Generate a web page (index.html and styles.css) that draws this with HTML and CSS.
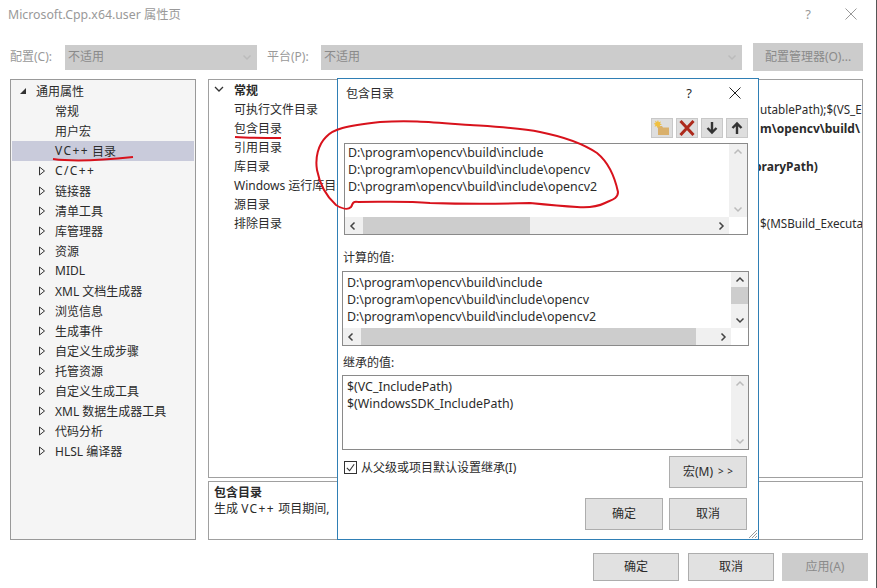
FILE: index.html
```html
<!DOCTYPE html>
<html lang="zh-CN">
<head>
  <meta charset="UTF-8" />
  <title>Microsoft.Cpp.x64.user 属性页</title>
  <link rel="stylesheet" href="styles.css">
</head>
<body>

<div class="window">
  <!-- 标题栏 -->
  <div class="titlebar">
    <span class="title">Microsoft.Cpp.x64.user 属性页</span>
    <span class="help">?</span>
    <svg class="close" viewBox="0 0 12 12"><path d="M.5.5l11 11M11.5.5l-11 11"/></svg>
  </div>

  <!-- 配置 / 平台 -->
  <div class="configbar">
    <span class="configlabel">配置(C):</span>
    <div class="combo combo-config"><span>不适用</span><svg class="chev chev-pale" viewBox="0 0 10 10"><path d="M1.5 3.5 5 7 8.5 3.5"/></svg></div>
    <span class="configlabel platform">平台(P):</span>
    <div class="combo combo-platform"><span>不适用</span><svg class="chev chev-pale" viewBox="0 0 10 10"><path d="M1.5 3.5 5 7 8.5 3.5"/></svg></div>
    <div class="btn-manager">配置管理器(O)...</div>
  </div>

  <div class="main">
    <!-- 左侧树 -->
    <div class="tree">
      <div class="node root"><svg class="tri" viewBox="0 0 8 8"><path class="solid" d="M7 1v6H1z"/></svg>通用属性</div>
      <div class="node leaf">常规</div>
      <div class="node leaf">用户宏</div>
      <div class="node leaf selected"><span class="wide">VC++</span>&nbsp;目录</div>
      <div class="node"><svg class="tri" viewBox="0 0 8 10"><path d="M1.5 1 6.5 5l-5 4z"/></svg><span class="wide">C/C++</span></div>
      <div class="node"><svg class="tri" viewBox="0 0 8 10"><path d="M1.5 1 6.5 5l-5 4z"/></svg>链接器</div>
      <div class="node"><svg class="tri" viewBox="0 0 8 10"><path d="M1.5 1 6.5 5l-5 4z"/></svg>清单工具</div>
      <div class="node"><svg class="tri" viewBox="0 0 8 10"><path d="M1.5 1 6.5 5l-5 4z"/></svg>库管理器</div>
      <div class="node"><svg class="tri" viewBox="0 0 8 10"><path d="M1.5 1 6.5 5l-5 4z"/></svg>资源</div>
      <div class="node"><svg class="tri" viewBox="0 0 8 10"><path d="M1.5 1 6.5 5l-5 4z"/></svg>MIDL</div>
      <div class="node"><svg class="tri" viewBox="0 0 8 10"><path d="M1.5 1 6.5 5l-5 4z"/></svg>XML 文档生成器</div>
      <div class="node"><svg class="tri" viewBox="0 0 8 10"><path d="M1.5 1 6.5 5l-5 4z"/></svg>浏览信息</div>
      <div class="node"><svg class="tri" viewBox="0 0 8 10"><path d="M1.5 1 6.5 5l-5 4z"/></svg>生成事件</div>
      <div class="node"><svg class="tri" viewBox="0 0 8 10"><path d="M1.5 1 6.5 5l-5 4z"/></svg>自定义生成步骤</div>
      <div class="node"><svg class="tri" viewBox="0 0 8 10"><path d="M1.5 1 6.5 5l-5 4z"/></svg>托管资源</div>
      <div class="node"><svg class="tri" viewBox="0 0 8 10"><path d="M1.5 1 6.5 5l-5 4z"/></svg>自定义生成工具</div>
      <div class="node"><svg class="tri" viewBox="0 0 8 10"><path d="M1.5 1 6.5 5l-5 4z"/></svg>XML 数据生成器工具</div>
      <div class="node"><svg class="tri" viewBox="0 0 8 10"><path d="M1.5 1 6.5 5l-5 4z"/></svg>代码分析</div>
      <div class="node"><svg class="tri" viewBox="0 0 8 10"><path d="M1.5 1 6.5 5l-5 4z"/></svg>HLSL 编译器</div>
    </div>

    <!-- 右侧属性表 -->
    <div class="rightcol">
      <div class="props">
        <div class="prop group"><svg class="groupchev" viewBox="0 0 10 10"><path d="M1 3l4 4 4-4"/></svg><span class="pname">常规</span></div>
        <div class="prop"><span class="pname">可执行文件目录</span><span class="pval">utablePath);$(VS_E</span></div>
        <div class="prop"><span class="pname">包含目录</span><span class="pval strong">m\opencv\build\</span></div>
        <div class="prop"><span class="pname">引用目录</span></div>
        <div class="prop"><span class="pname">库目录</span><span class="pval strong lib">braryPath)</span></div>
        <div class="prop"><span class="pname">Windows 运行库目录</span></div>
        <div class="prop"><span class="pname">源目录</span></div>
        <div class="prop"><span class="pname">排除目录</span><span class="pval">$(MSBuild_Executa</span></div>
      </div>
      <div class="desc">
        <div class="desctitle">包含目录</div>
        <div>生成 <span class="wide">VC++</span> 项目期间,</div>
      </div>
    </div>
  </div>

  <div class="footer">
    <div class="btn btn-foot">确定</div>
    <div class="btn btn-foot">取消</div>
    <div class="btn btn-foot disabled">应用(A)</div>
  </div>
</div>

<!-- 包含目录 对话框 -->
<div class="dialog">
  <div class="dlghead">
    <span class="dlgtitle">包含目录</span>
    <span class="dlghelp">?</span>
    <svg class="dlgclose" viewBox="0 0 12 12"><path d="M.5.5l11 11M11.5.5l-11 11"/></svg>
  </div>

  <div class="tools">
    <div class="tool"><svg viewBox="0 0 16 16"><path fill="#d9b06c" d="M4 6h4l1 1.500h6V15H4z"/><path fill="#f0c040" d="M4 0l.8 2.200 2.200-.8-1 2.100 2 1-2.200.7.700 2.200-2-1.100-1.100 2-.7-2.200-2.200.7 1-2.100-2-1 2.200-.7-.700-2.200 2 1.100z"/></svg></div>
    <div class="tool"><svg viewBox="0 0 16 16"><path fill="none" stroke="#ad2a1c" stroke-width="3" d="M1.500 1 14.500 15M14.500 1 1.500 15"/></svg></div>
    <div class="tool"><svg viewBox="0 0 16 16"><path fill="none" stroke="#333" stroke-width="2.400" d="M8 2v10M3.500 8 8 12.500 12.500 8"/></svg></div>
    <div class="tool"><svg viewBox="0 0 16 16"><path fill="none" stroke="#333" stroke-width="2.400" d="M8 14V4M3.500 8 8 3.500 12.500 8"/></svg></div>
  </div>

  <div class="listbox list-edit">
    <div class="lines">
      <div>D:\program\opencv\build\include</div>
      <div>D:\program\opencv\build\include\opencv</div>
      <div>D:\program\opencv\build\include\opencv2</div>
    </div>
    <div class="vbar">
      <svg class="chev chev-pale" viewBox="0 0 10 10"><path d="M1.500 6.500 5 3l3.500 3.500"/></svg>
      <svg class="chev chev-pale" viewBox="0 0 10 10"><path d="M1.500 3.500 5 7l3.500-3.500"/></svg>
    </div>
    <div class="hbar">
      <svg class="chev" viewBox="0 0 10 10"><path d="M6.500 1.500 3 5l3.500 3.500"/></svg>
      <div class="htrack"><div class="hthumb thumb-edit"></div></div>
      <svg class="chev" viewBox="0 0 10 10"><path d="M3.500 1.500 7 5 3.500 8.500"/></svg>
    </div>
  </div>

  <div class="label label-calc">计算的值:</div>
  <div class="listbox list-calc">
    <div class="lines">
      <div>D:\program\opencv\build\include</div>
      <div>D:\program\opencv\build\include\opencv</div>
      <div>D:\program\opencv\build\include\opencv2</div>
    </div>
    <div class="vbar">
      <svg class="chev" viewBox="0 0 10 10"><path d="M1.500 6.500 5 3l3.500 3.500"/></svg>
      <div class="vthumb"></div>
      <svg class="chev chev-end" viewBox="0 0 10 10"><path d="M1.500 3.500 5 7l3.500-3.500"/></svg>
    </div>
    <div class="hbar">
      <svg class="chev" viewBox="0 0 10 10"><path d="M6.500 1.500 3 5l3.500 3.500"/></svg>
      <div class="htrack"><div class="hthumb thumb-calc"></div></div>
      <svg class="chev" viewBox="0 0 10 10"><path d="M3.500 1.500 7 5 3.500 8.500"/></svg>
    </div>
  </div>

  <div class="label label-inherit">继承的值:</div>
  <div class="listbox list-inherit">
    <div class="lines">
      <div>$(VC_IncludePath)</div>
      <div>$(WindowsSDK_IncludePath)</div>
    </div>
    <div class="vbar">
      <svg class="chev chev-pale" viewBox="0 0 10 10"><path d="M1.500 6.500 5 3l3.500 3.500"/></svg>
      <svg class="chev chev-pale" viewBox="0 0 10 10"><path d="M1.500 3.500 5 7l3.500-3.500"/></svg>
    </div>
  </div>

  <div class="macrorow">
    <label class="inherit">
      <span class="check"><svg viewBox="0 0 12 12"><path d="M2 6.500 5 9.500 10 2.500"/></svg></span>从父级或项目默认设置继承(I)
    </label>
    <div class="btn btn-dlg">宏(M)<span class="arrows">&gt; &gt;</span></div>
  </div>
  <div class="dlgfoot">
    <div class="btn btn-dlg">确定</div>
    <div class="btn btn-dlg">取消</div>
  </div>
  <svg class="grip" viewBox="0 0 10 10"><path d="M9 1 1 9M9 4 4 9M9 7 7 9"/></svg>
</div>

<!-- 红笔标注 -->
<svg class="ink" viewBox="0 0 877 588">
  <path d="M53 159C75 162 105 160 133 157"/>
  <path d="M235 137C250 138 265 138 281 138"/>
  <path d="M358 202C352 201 353 204 351 207C348 210 342 209 336 205C326 196 320 186 317 170C315 158 318 145 326 137C333 129 345 126 380 122C410 120 430 122 470 125C500 127 520 128 540 132C565 137 585 145 597 153C608 162 615 178 618 192C618 199 611 200 605 203C597 207 590 208 577 207C560 206 540 204 530 203C500 204 460 204 430 203C405 201 385 202 358 202"/>
</svg>

</body>
</html>
```

FILE: styles.css
```css
html, body {
  margin: 0;
  padding: 0;
}

body {
  position: relative;
  width: 877px;
  height: 588px;
  overflow: hidden;
  background: #fff;
  font-family: "Noto Sans", "Noto Sans CJK SC", sans-serif;
  font-size: 12px;
  color: #2b2b2b;
}

svg {
  display: block;
  flex: none;
}

.wide {
  letter-spacing: 1.400px;
}

.window {
  display: flex;
  flex-direction: column;
  box-sizing: border-box;
  width: 877px;
  height: 588px;
  padding: 0 13px 0 10px;
  border-right: 1px solid #555;
}

/* titlebar */
.titlebar {
  display: flex;
  align-items: center;
  box-sizing: border-box;
  height: 30px;
  padding-bottom: 2px;
  margin-left: -2px;
  margin-right: 6px;
  color: #999;
}

.title {
  flex: 1;
  font-size: 12.300px;
}

.help {
  margin-right: 34px;
  font-size: 13px;
}

.close {
  width: 12px;
  height: 12px;
  fill: none;
  stroke: #999;
}

/* config row */
.configbar {
  display: flex;
  align-items: center;
  height: 28px;
  margin-top: 13px;
  color: #999;
}

.configlabel {
  width: 55px;
  padding-bottom: 2px;
}

.platform {
  width: 54px;
  margin-left: 10px;
}

.combo {
  display: flex;
  align-items: center;
  justify-content: space-between;
  box-sizing: border-box;
  height: 25px;
  padding: 0 5px 0 3px;
  background: #ccc;
  color: #8a8a8a;
}

.combo span {
  padding-bottom: 2px;
}

.combo-config {
  width: 192px;
}

.combo-platform {
  width: 421px;
}

.btn-manager {
  display: flex;
  align-items: center;
  justify-content: center;
  box-sizing: border-box;
  width: 110px;
  height: 28px;
  margin-left: 11px;
  padding-bottom: 2px;
  background: #ccc;
  color: #8a8a8a;
}

.chev {
  width: 10px;
  height: 10px;
  fill: none;
  stroke: #444;
  stroke-width: 1.500;
}

.chev-pale {
  stroke: #bbb;
}

/* main */
.main {
  display: flex;
  gap: 12px;
  height: 461px;
  margin-top: 8px;
}

.tree {
  flex: none;
  box-sizing: border-box;
  width: 186px;
  padding: 1px;
  background: #f5f5f5;
  border: 1px solid #999;
}

.node {
  display: flex;
  align-items: center;
  box-sizing: border-box;
  height: 20px;
  padding-left: 27px;
  padding-bottom: 1px;
  white-space: nowrap;
}

.node .tri {
  width: 8px;
  height: 10px;
  margin-left: -1px;
  margin-right: 9px;
  fill: none;
  stroke: #333;
}

.root {
  padding-left: 7px;
}

.root .tri {
  margin-right: 9px;
  margin-left: 0;
  height: 8px;
}

.root .tri .solid {
  fill: #333;
  stroke: none;
}

.node.leaf {
  padding-left: 43px;
}

.selected {
  background: #c9cbdb;
}

.rightcol {
  display: flex;
  flex: 1;
  flex-direction: column;
  gap: 3px;
  min-width: 0;
}

.props {
  flex: 1;
  box-sizing: border-box;
  padding-top: 1px;
  overflow: hidden;
  border: 1px solid #a0a0a0;
}

.prop {
  display: flex;
  align-items: center;
  box-sizing: border-box;
  height: 19px;
  padding-left: 25px;
  padding-bottom: 1px;
  position: relative;
  white-space: nowrap;
}

.group .pname {
  font-weight: 700;
}

.groupchev {
  position: absolute;
  left: 5px;
  top: 3px;
  width: 10px;
  height: 10px;
  fill: none;
  stroke: #333;
  stroke-width: 1.300;
}

.pname {
  width: 526px;
  flex: none;
}

.pval {
  flex: 1;
  min-width: 0;
  overflow: hidden;
  font-size: 11.700px;
}

.strong {
  font-weight: 700;
  font-size: 12px;
}

.lib {
  margin-left: -6px;
}

.desc {
  box-sizing: border-box;
  height: 59px;
  padding: 3px 5px;
  border: 1px solid #a0a0a0;
  line-height: 16px;
}

.desctitle {
  font-weight: 700;
}

/* footer */
.footer {
  display: flex;
  justify-content: flex-end;
  gap: 9px;
  margin-top: 13px;
  margin-right: -5px;
}

.btn {
  display: flex;
  align-items: center;
  justify-content: center;
  box-sizing: border-box;
  padding-bottom: 2px;
  background: #e1e1e1;
  border: 1px solid #adadad;
}

.btn-foot {
  width: 86px;
  height: 28px;
}

.btn-foot.disabled {
  margin-left: -1px;
  background: #ccc;
  border-color: #ccc;
  color: #8a8a8a;
}

/* dialog */
.dialog {
  position: absolute;
  left: 337px;
  top: 78px;
  box-sizing: border-box;
  width: 422px;
  height: 462px;
  padding: 0 9px 0 4px;
  background: #fff;
  border: 1px solid #2f7fb5;
}

.dlghead {
  display: flex;
  align-items: center;
  box-sizing: border-box;
  height: 29px;
  padding: 0 8px 2px 4px;
}

.dlgtitle {
  flex: 1;
}

.dlghelp {
  margin-right: 37px;
  font-size: 13px;
}

.dlgclose {
  width: 12px;
  height: 12px;
  fill: none;
  stroke: #222;
}

.tools {
  display: flex;
  justify-content: flex-end;
  gap: 3px;
  margin-top: 10px;
  margin-right: 1px;
}

.tool {
  display: flex;
  align-items: center;
  justify-content: center;
  box-sizing: border-box;
  width: 22px;
  height: 20px;
  background: #dedede;
  border: 1px solid #c8c8c8;
}

.tool svg {
  width: 16px;
  height: 16px;
}

.listbox {
  display: grid;
  grid-template-columns: 1fr 17px;
  grid-template-rows: 1fr 17px;
  box-sizing: border-box;
  border: 1px solid #8a8a8a;
}

.list-edit {
  height: 92px;
  margin: 5px 1px 0 2px;
  grid-template-columns: 1fr 18px;
}

.list-calc {
  height: 75px;
}

.list-inherit {
  height: 75px;
  grid-template-rows: 1fr;
}

.lines {
  padding: 2px 4px 0;
  overflow: hidden;
  font-size: 12.400px;
  line-height: 17px;
  white-space: nowrap;
}

.list-edit .lines {
  padding: 0 3px;
}

.vbar {
  display: flex;
  flex-direction: column;
  justify-content: space-between;
  align-items: center;
  padding: 3px 0;
  background: #f0f0f0;
}

.vthumb {
  align-self: stretch;
  height: 17px;
  margin-top: 2px;
  background: #cdcdcd;
}

.chev-end {
  margin-top: auto;
}

.hbar {
  display: flex;
  align-items: center;
  padding: 0 3px;
  background: #f0f0f0;
}

.htrack {
  flex: 1;
  height: 100%;
  padding-left: 5px;
}

.hthumb {
  height: 100%;
  background: #cdcdcd;
}

.thumb-edit {
  width: 167px;
}

.thumb-calc {
  width: 335px;
}

.label {
  display: flex;
  align-items: center;
  box-sizing: border-box;
  height: 22px;
  padding-left: 1px;
  padding-bottom: 2px;
}

.label-calc {
  margin-top: 12px;
  margin-bottom: 2px;
}

.label-inherit {
  margin-top: 6px;
  margin-bottom: 1px;
}

.macrorow {
  display: flex;
  justify-content: space-between;
  align-items: flex-start;
  margin-top: 6px;
  padding-right: 2px;
}

.inherit {
  display: flex;
  align-items: center;
  gap: 4px;
  margin-left: 2px;
  margin-top: 2px;
}

.check {
  box-sizing: border-box;
  width: 13px;
  height: 13px;
  background: #fff;
  border: 1px solid #333;
}

.check svg {
  width: 11px;
  height: 11px;
  fill: none;
  stroke: #333;
  stroke-width: 1.200;
}

.btn-dlg {
  width: 78px;
  height: 32px;
}

.arrows {
  margin-left: 5px;
  font-size: 10px;
  word-spacing: 1px;
}

.dlgfoot {
  display: flex;
  justify-content: flex-end;
  gap: 6px;
  margin-top: 10px;
  padding-right: 2px;
}

.grip {
  position: absolute;
  right: 0;
  bottom: 0;
  width: 10px;
  height: 10px;
  fill: none;
  stroke: #9a9a9a;
}

/* red pen */
.ink {
  position: absolute;
  left: 0;
  top: 0;
  width: 877px;
  height: 588px;
  fill: none;
  stroke: #d8121c;
  stroke-width: 2;
  pointer-events: none;
}
```
